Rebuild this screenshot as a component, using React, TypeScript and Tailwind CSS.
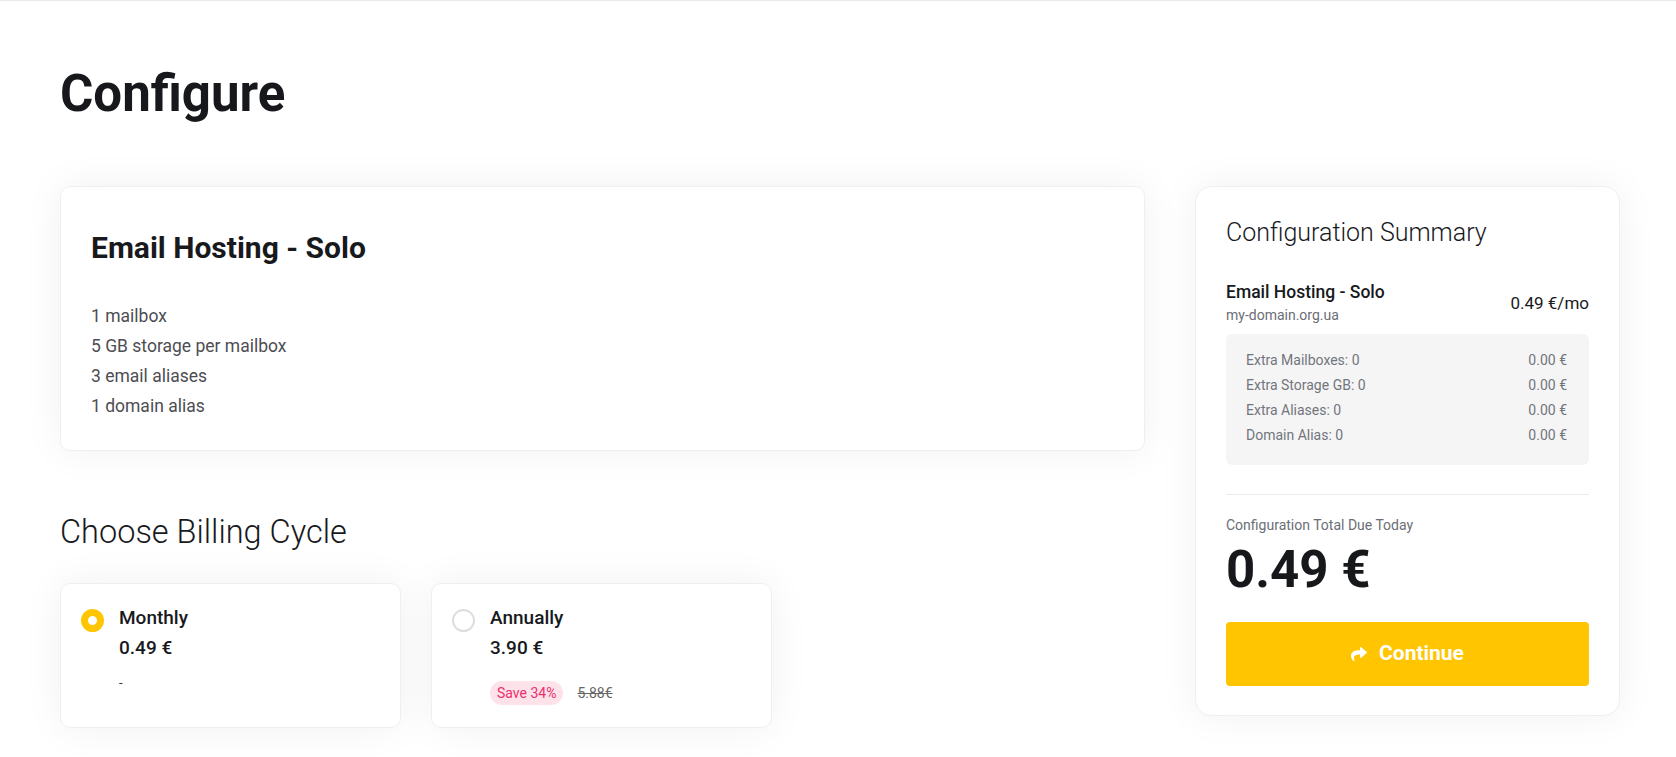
import { FaShare } from 'react-icons/fa';

interface Cycle {
  name: string;
  price: string;
  selected?: boolean;
  save?: string;
  oldPrice?: string;
}

const features = ['1 mailbox', '5 GB storage per mailbox', '3 email aliases', '1 domain alias'];

const extras = [
  { label: 'Extra Mailboxes: 0', value: '0.00 €' },
  { label: 'Extra Storage GB: 0', value: '0.00 €' },
  { label: 'Extra Aliases: 0', value: '0.00 €' },
  { label: 'Domain Alias: 0', value: '0.00 €' },
];

const cycles: Cycle[] = [
  { name: 'Monthly', price: '0.49 €', selected: true },
  { name: 'Annually', price: '3.90 €', save: 'Save 34%', oldPrice: '5.88€' },
];

function CycleCard({ name, price, selected, save, oldPrice }: Cycle) {
  return (
    <div className="w-[341px] flex gap-[15px] pl-5 pt-[19px] pb-[22px] bg-white rounded-[10px] border border-[#efefef] shadow-[0_0_40px_rgba(0,0,0,0.06)]">
      {/* Radio */}
      {selected ? (
        <span className="mt-[6px] w-[23px] h-[23px] rounded-full border-[7px] border-[#ffc500] bg-white shrink-0" />
      ) : (
        <span className="mt-[6px] w-[23px] h-[23px] rounded-full border-2 border-[#dedede] bg-white shrink-0" />
      )}
      <div className="flex flex-col">
        <p className="text-[19px] leading-[30px] font-medium text-[#18191d]">{name}</p>
        <p className="text-[19px] leading-[30px] font-medium text-[#18191d]">{price}</p>
        {save ? (
          <div className="mt-[18px] h-6 flex items-center gap-[14px]">
            <span className="h-6 flex items-center px-[7px] rounded-full bg-[#fde2ea] text-[14px] text-[#ec2f6c]">{save}</span>
            <span className="text-[14px] text-[#666] line-through">{oldPrice}</span>
          </div>
        ) : (
          <p className="mt-[12px] text-[13px] leading-4 text-[#333]">-</p>
        )}
      </div>
    </div>
  );
}

export default function App() {
  return (
    <div className="min-h-[757px] bg-white border-t border-[#e9e9e9] font-['Roboto','Liberation_Sans',sans-serif] text-[#18191d]">
      <div className="pl-[60px] pr-[56px] pt-[67px]">
        <h1 className="text-[51px] leading-[52px] font-bold text-[#17181c]">Configure</h1>

        <div className="mt-[66px] flex gap-[50px] items-start">
          {/* Main column */}
          <div className="w-[1085px]">
            <div className="bg-white rounded-[10px] border border-[#efefef] shadow-[0_0_40px_rgba(0,0,0,0.06)] px-[30px] pt-[43px] pb-[29px]">
              <h3 className="text-[30px] leading-[36px] font-bold">Email Hosting - Solo</h3>
              <ul className="mt-[35px] text-[17.5px] leading-[30px] text-[#4d4d52]">
                {features.map((f) => (
                  <li key={f}>{f}</li>
                ))}
              </ul>
            </div>

            <h2 className="mt-[61px] text-[32.5px] leading-[40px] font-light">Choose Billing Cycle</h2>

            <div className="mt-[31px] flex gap-[30px]">
              {cycles.map((c) => (
                <CycleCard key={c.name} {...c} />
              ))}
            </div>
          </div>

          {/* Summary */}
          <div className="w-[425px] bg-white rounded-[16px] border border-[#efefef] shadow-[0_0_40px_rgba(0,0,0,0.06)] px-[30px] pt-[31px] pb-[29px]">
            <h4 className="text-[25px] leading-[30px] font-light">Configuration Summary</h4>

            <div className="mt-[33px] flex items-center justify-between">
              <div>
                <p className="text-[17.5px] leading-[22px] font-medium">Email Hosting - Solo</p>
                <p className="mt-[2px] text-[14px] leading-[20px] text-[#6b6e76]">my-domain.org.ua</p>
              </div>
              <span className="text-[17px] leading-[22px]">0.49 €/mo</span>
            </div>

            <div className="mt-[9px] bg-[#f5f5f5] rounded-[6px] pl-5 pr-[22px] pt-[14px] pb-[17px]">
              {extras.map((e) => (
                <div key={e.label} className="flex justify-between text-[14px] leading-[25px] text-[#72757d]">
                  <span>{e.label}</span>
                  <span>{e.value}</span>
                </div>
              ))}
            </div>

            <div className="mt-[29px] border-t border-[#ebebeb]" />

            <p className="mt-[20px] text-[14px] leading-[20px] text-[#6b6e76]">Configuration Total Due Today</p>
            <p className="mt-[9px] text-[51px] leading-[52px] font-bold text-[#17181c]">0.49 €</p>

            <button className="mt-[26px] w-full h-[64px] flex items-center justify-center gap-3 rounded-[4px] bg-[#ffc500] text-white text-[21px] font-bold">
              <FaShare className="w-4 h-4" />
              Continue
            </button>
          </div>
        </div>
      </div>
    </div>
  );
}
